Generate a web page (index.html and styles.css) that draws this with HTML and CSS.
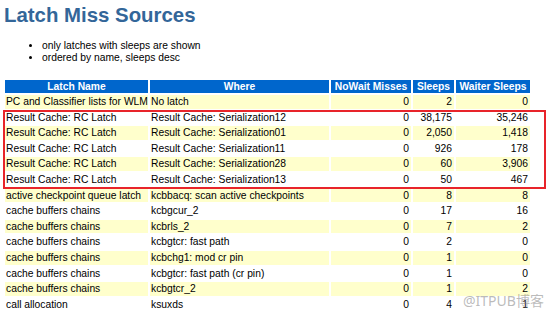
FILE: index.html
```html
<!DOCTYPE html>
<html>
<head>
<meta charset="utf-8">
<link rel="stylesheet" href="styles.css">
</head>
<body>
<div class="page">
  <h1 class="title">Latch Miss Sources</h1>
  <ul class="notes">
    <li>only latches with sleeps are shown</li>
    <li>ordered by name, sleeps desc</li>
  </ul>
  <div class="tablewrap">
    <table class="report">
      <thead>
        <tr>
          <th class="c1">Latch Name</th>
          <th class="c2">Where</th>
          <th class="c3">NoWait Misses</th>
          <th class="c4">Sleeps</th>
          <th class="c5">Waiter Sleeps</th>
        </tr>
      </thead>
      <tbody>
        <tr class="y"><td>PC and Classifier lists for WLM</td><td>No latch</td><td class="n">0</td><td class="n">2</td><td class="n">0</td></tr>
        <tr><td>Result Cache: RC Latch</td><td>Result Cache: Serialization12</td><td class="n">0</td><td class="n">38,175</td><td class="n">35,246</td></tr>
        <tr class="y"><td>Result Cache: RC Latch</td><td>Result Cache: Serialization01</td><td class="n">0</td><td class="n">2,050</td><td class="n">1,418</td></tr>
        <tr><td>Result Cache: RC Latch</td><td>Result Cache: Serialization11</td><td class="n">0</td><td class="n">926</td><td class="n">178</td></tr>
        <tr class="y"><td>Result Cache: RC Latch</td><td>Result Cache: Serialization28</td><td class="n">0</td><td class="n">60</td><td class="n">3,906</td></tr>
        <tr><td>Result Cache: RC Latch</td><td>Result Cache: Serialization13</td><td class="n">0</td><td class="n">50</td><td class="n">467</td></tr>
        <tr class="y"><td>active checkpoint queue latch</td><td>kcbbacq: scan active checkpoints</td><td class="n">0</td><td class="n">8</td><td class="n">8</td></tr>
        <tr><td>cache buffers chains</td><td>kcbgcur_2</td><td class="n">0</td><td class="n">17</td><td class="n">16</td></tr>
        <tr class="y"><td>cache buffers chains</td><td>kcbrls_2</td><td class="n">0</td><td class="n">7</td><td class="n">2</td></tr>
        <tr><td>cache buffers chains</td><td>kcbgtcr: fast path</td><td class="n">0</td><td class="n">2</td><td class="n">0</td></tr>
        <tr class="y"><td>cache buffers chains</td><td>kcbchg1: mod cr pin</td><td class="n">0</td><td class="n">1</td><td class="n">0</td></tr>
        <tr><td>cache buffers chains</td><td>kcbgtcr: fast path (cr pin)</td><td class="n">0</td><td class="n">1</td><td class="n">0</td></tr>
        <tr class="y"><td>cache buffers chains</td><td>kcbgtcr_2</td><td class="n">0</td><td class="n">1</td><td class="n">2</td></tr>
        <tr><td>call allocation</td><td>ksuxds</td><td class="n">0</td><td class="n">4</td><td class="n">1</td></tr>
      </tbody>
    </table>
    <div class="redbox"></div>
  </div>
  <div class="watermark">@ITPUB博客</div>
</div>
</body>
</html>
```
FILE: styles.css
```css
html, body {
  margin: 0;
  padding: 0;
  background: #ffffff;
}
.page {
  position: relative;
  width: 553px;
  height: 315px;
  overflow: hidden;
  font-family: "Liberation Sans", Arial, sans-serif;
  color: #000;
}
.title {
  margin: 0;
  padding: 3px 0 0 4px;
  font-size: 20.4px;
  line-height: 25px;
  font-weight: bold;
  color: #336699;
}
.notes {
  margin: 12px 0 0 0;
  padding: 0 0 0 42px;
  font-size: 10.3px;
  line-height: 12px;
}
.notes li {
  margin: 0;
}
.tablewrap {
  position: relative;
  margin: 14px 0 0 3px;
}
.report {
  border-collapse: separate;
  border-spacing: 2px;
  font-size: 10.3px;
  table-layout: fixed;
  width: 529px;
}
.report th,
.report td {
  box-sizing: border-box;
  white-space: nowrap;
  overflow: hidden;
}
.report th {
  background: #0066cc;
  color: #ffffff;
  font-weight: bold;
  height: 13px;
  line-height: 13px;
  padding: 0 2px;
}
.report td {
  height: 13.6px;
  line-height: 13.6px;
  padding: 0 2px 0 1px;
}
.report tr.y td {
  background: #ffffcc;
}
.report td.n {
  text-align: right;
}
.c1 { width: 143px; }
.c2 { width: 179px; }
.c3 { width: 80px; }
.c4 { width: 41px; }
.c5 { width: 74px; }
.redbox {
  position: absolute;
  left: 0;
  top: 32px;
  width: 539px;
  height: 75px;
  border: 2px solid #e8242a;
}
.watermark {
  position: absolute;
  left: 463px;
  top: 292px;
  font-family: "Noto Sans", "Noto Sans CJK SC", sans-serif;
  font-size: 14px;
  line-height: 18px;
  color: rgba(120, 120, 120, 0.5);
}
```
